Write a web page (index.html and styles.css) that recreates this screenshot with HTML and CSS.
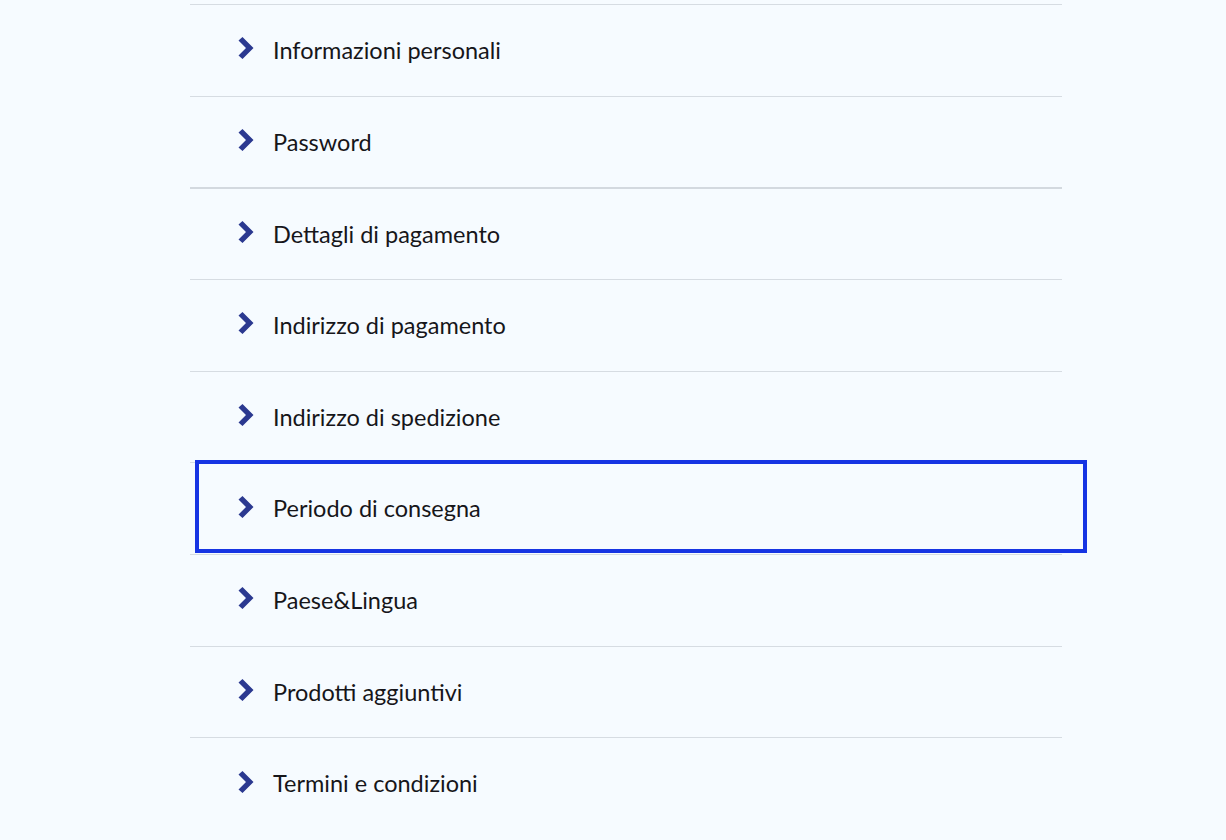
FILE: index.html
```html
<!DOCTYPE html>
<html lang="it">
<head>
<meta charset="utf-8">
<title>Account</title>
<link rel="stylesheet" href="styles.css">
</head>
<body>
<ul class="menu">
  <li class="item"><span class="chev"><svg viewBox="0 0 16 22" width="16" height="22"><polygon points="0.5,3.5 4.5,0 15.5,11 4.5,22 0.5,18.5 8,11"/></svg></span><span class="label">Informazioni personali</span></li>
  <li class="item"><span class="chev"><svg viewBox="0 0 16 22" width="16" height="22"><polygon points="0.5,3.5 4.5,0 15.5,11 4.5,22 0.5,18.5 8,11"/></svg></span><span class="label">Password</span></li>
  <li class="item group-start"><span class="chev"><svg viewBox="0 0 16 22" width="16" height="22"><polygon points="0.5,3.5 4.5,0 15.5,11 4.5,22 0.5,18.5 8,11"/></svg></span><span class="label">Dettagli di pagamento</span></li>
  <li class="item"><span class="chev"><svg viewBox="0 0 16 22" width="16" height="22"><polygon points="0.5,3.5 4.5,0 15.5,11 4.5,22 0.5,18.5 8,11"/></svg></span><span class="label">Indirizzo di pagamento</span></li>
  <li class="item"><span class="chev"><svg viewBox="0 0 16 22" width="16" height="22"><polygon points="0.5,3.5 4.5,0 15.5,11 4.5,22 0.5,18.5 8,11"/></svg></span><span class="label">Indirizzo di spedizione</span></li>
  <li class="item focused"><span class="chev"><svg viewBox="0 0 16 22" width="16" height="22"><polygon points="0.5,3.5 4.5,0 15.5,11 4.5,22 0.5,18.5 8,11"/></svg></span><span class="label">Periodo di consegna</span></li>
  <li class="item"><span class="chev"><svg viewBox="0 0 16 22" width="16" height="22"><polygon points="0.5,3.5 4.5,0 15.5,11 4.5,22 0.5,18.5 8,11"/></svg></span><span class="label">Paese&amp;Lingua</span></li>
  <li class="item"><span class="chev"><svg viewBox="0 0 16 22" width="16" height="22"><polygon points="0.5,3.5 4.5,0 15.5,11 4.5,22 0.5,18.5 8,11"/></svg></span><span class="label">Prodotti aggiuntivi</span></li>
  <li class="item"><span class="chev"><svg viewBox="0 0 16 22" width="16" height="22"><polygon points="0.5,3.5 4.5,0 15.5,11 4.5,22 0.5,18.5 8,11"/></svg></span><span class="label">Termini e condizioni</span></li>
</ul>
</body>
</html>
```
FILE: styles.css
```css
html, body {
  margin: 0;
  padding: 0;
  background: #f6fbff;
}
body {
  font-family: "Lato", "Noto Sans", sans-serif;
  color: #16161a;
  overflow: hidden;
  height: 840px;
}
.menu {
  list-style: none;
  margin: 4px 0 0 190px;
  padding: 0;
  width: 872px;
}
.item {
  position: relative;
  box-sizing: border-box;
  height: 91.67px;
  border-top: 1px solid #d6dce2;
  display: flex;
  align-items: center;
  padding-left: 48px;
}
.item.group-start {
  border-top: 2px solid #d3d9df;
}
.chev {
  display: flex;
  width: 16px;
  height: 22px;
  margin-top: -4px;
  margin-right: 19px;
}
.chev svg {
  fill: #2b3990;
}
.label {
  font-size: 23.5px;
  line-height: 1;
  margin-top: 1px;
}
.focused {
  z-index: 1;
}
.focused::after {
  content: "";
  position: absolute;
  left: 5px;
  right: -25px;
  top: -3px;
  bottom: 0.5px;
  border: 4px solid #1634e3;
  pointer-events: none;
}
```
